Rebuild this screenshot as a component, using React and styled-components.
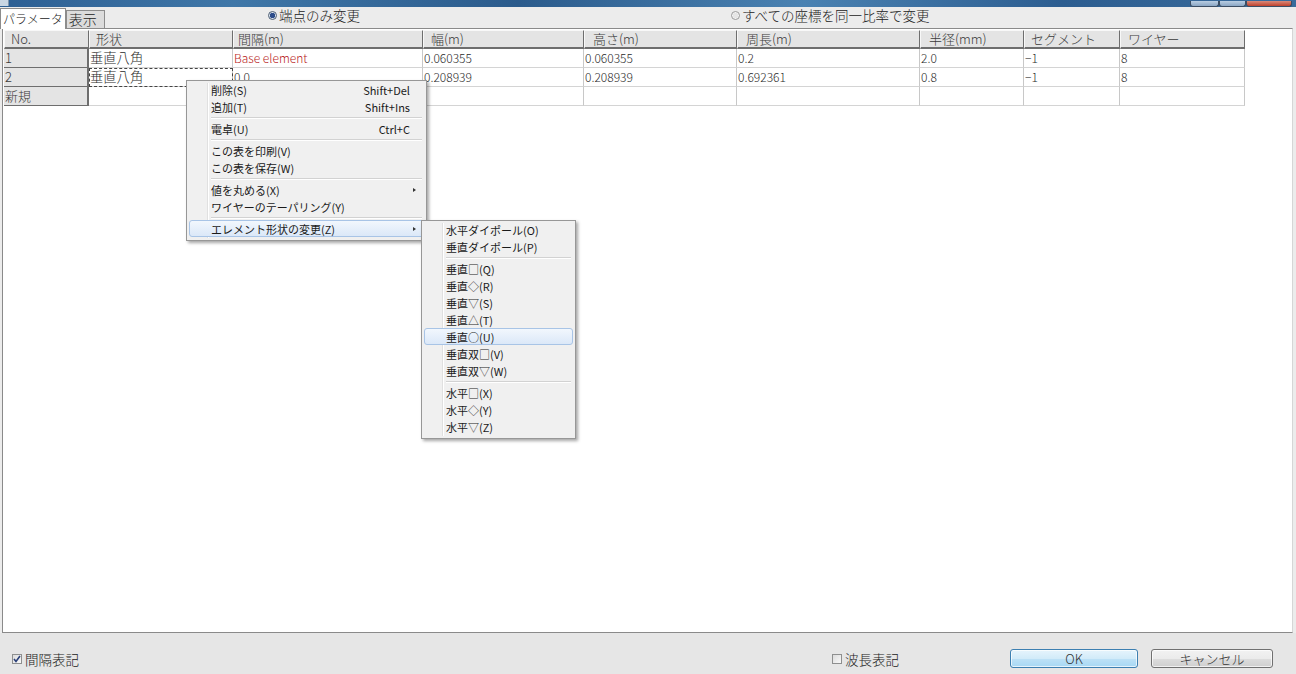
import React from "react";
import styled, { createGlobalStyle, css } from "styled-components";

const GlobalStyle = createGlobalStyle`
  html, body {
    margin: 0;
    padding: 0;
    background: #ececec;
    font-family: "Noto Sans CJK JP", "Noto Sans", sans-serif;
    color: #1e1e1e;
  }
`;

const columns = [
  { title: "No.", width: 85, indent: 6 },
  { title: "形状", width: 144, indent: 6 },
  { title: "間隔(m)", width: 190, indent: 4 },
  { title: "幅(m)", width: 161, indent: 7 },
  { title: "高さ(m)", width: 153, indent: 8 },
  { title: "周長(m)", width: 183, indent: 8 },
  { title: "半径(mm)", width: 104, indent: 8 },
  { title: "セグメント", width: 96, indent: 6 },
  { title: "ワイヤー", width: 125, indent: 7 },
];

const rows = [
  ["1", "垂直八角", "Base element", "0.060355", "0.060355", "0.2", "2.0", "−1", "8"],
  ["2", "垂直八角", "0.0", "0.208939", "0.208939", "0.692361", "0.8", "−1", "8"],
  ["新規", "", "", "", "", "", "", "", ""],
];

const mainMenu = [
  { label: "削除(S)", key: "Shift+Del" },
  { label: "追加(T)", key: "Shift+Ins" },
  "sep",
  { label: "電卓(U)", key: "Ctrl+C" },
  "sep",
  { label: "この表を印刷(V)" },
  { label: "この表を保存(W)" },
  "sep",
  { label: "値を丸める(X)", sub: true },
  { label: "ワイヤーのテーパリング(Y)" },
  "sep",
  { label: "エレメント形状の変更(Z)", sub: true, active: true },
];

const shapeMenu = [
  { label: "水平ダイポール(O)" },
  { label: "垂直ダイポール(P)" },
  "sep",
  { label: "垂直□(Q)" },
  { label: "垂直◇(R)" },
  { label: "垂直▽(S)" },
  { label: "垂直△(T)" },
  { label: "垂直○(U)", active: true },
  { label: "垂直双□(V)" },
  { label: "垂直双▽(W)" },
  "sep",
  { label: "水平□(X)" },
  { label: "水平◇(Y)" },
  { label: "水平▽(Z)" },
];

const isCjk = (s) => /[\u3040-\u30ff\u4e00-\u9fff]/.test(s);

const Window = styled.div`
  width: 1296px;
  height: 674px;
  display: flex;
  flex-direction: column;
  overflow: hidden;
`;

const TitleStrip = styled.div`
  height: 7px;
  display: flex;
  justify-content: space-between;
  background: linear-gradient(90deg, #2d5f93 0%, #3f77a8 18%, #2b5b8c 40%, #4a82b2 62%, #2c5d90 82%, #3a6c9c 100%);
`;

const AppIcon = styled.div`
  width: 8px;
  height: 6px;
  background: #c9d6e3;
  border-right: 1px solid #7f95ab;
`;

const Controls = styled.div`
  display: flex;
  align-items: flex-end;
  margin-right: 4px;
`;

const CtrlBtn = styled.div`
  width: ${(p) => p.$w}px;
  height: 5px;
  border: 1px solid #3b4d63;
  border-top: none;
  border-radius: 0 0 3px 3px;
  background: ${(p) => (p.$close ? "linear-gradient(#d98a7a, #c0412c)" : "linear-gradient(#b9cde2, #8aa6c4)")};
`;

const TopBar = styled.div`
  height: 21px;
  display: flex;
  align-items: flex-end;
  background: #ececec;
  position: relative;
`;

const Tab = styled.div`
  height: ${(p) => (p.$active ? 21 : 18)}px;
  box-sizing: border-box;
  padding: ${(p) => (p.$active ? "0 2px" : "0 7px 0 2px")};
  font-size: ${(p) => (p.$active ? 12 : 14)}px;
  font-weight: 300;
  line-height: ${(p) => (p.$active ? 20 : 17)}px;
  border: 1px solid #8c8c8c;
  border-bottom: none;
  background: ${(p) => (p.$active ? "#ffffff" : "#dcdcdc")};
  color: #222;
  margin-bottom: ${(p) => (p.$active ? -1 : 0)}px;
  z-index: ${(p) => (p.$active ? 2 : 1)};
`;

const Radio = styled.label`
  position: absolute;
  top: 0;
  left: ${(p) => p.$left}px;
  display: flex;
  align-items: center;
  gap: 2px;
  font-size: 13.5px;
  font-weight: 300;
  line-height: 17px;
  color: #222;
`;

const RadioDot = styled.span`
  width: 9px;
  height: 9px;
  border-radius: 50%;
  box-sizing: border-box;
  border: 1px solid ${(p) => (p.$on ? "#4f5f74" : "#9a9a9a")};
  background: ${(p) =>
    p.$on ? "radial-gradient(circle, #2d4d8a 0 2.5px, #d8e2ee 3px)" : "radial-gradient(circle, #e6e6e6 0 2.5px, #f4f4f4 3px)"};
`;

const GridPane = styled.div`
  flex: 1;
  position: relative;
  background: #ffffff;
  border: 1px solid #8a8a8a;
  border-right-color: #d6d6d6;
  margin: 0 3px 0 2px;
  padding: 1px 0 0 1px;
`;

const Table = styled.div`
  display: grid;
  grid-template-columns: ${columns.map((c) => c.width + "px").join(" ")};
  grid-auto-rows: 19px;
  width: max-content;
  font-weight: 300;
`;

const HeadCell = styled.div`
  background: #e4e4e4;
  border-right: 1px solid #6e6e6e;
  border-bottom: 2px solid #6e6e6e;
  border-top: 1px solid #f8f8f8;
  border-left: 1px solid #f8f8f8;
  box-sizing: border-box;
  padding-left: ${(p) => p.$indent}px;
  font-size: 13px;
  line-height: 15px;
  color: #3a3a3a;
  white-space: nowrap;
  overflow: hidden;
`;

const RowHead = styled.div`
  background: #e4e4e4;
  border-right: 2px solid #6e6e6e;
  border-bottom: 1px solid #6e6e6e;
  box-sizing: border-box;
  padding-left: 1px;
  font-size: 13px;
  line-height: 17px;
  color: #3a3a3a;
`;

const Cell = styled.div`
  position: relative;
  border-right: 1px solid #c8c8c8;
  border-bottom: 1px solid #d4d4d4;
  box-sizing: border-box;
  padding-left: 1px;
  font-size: ${(p) => (p.$cjk ? 13.3 : 12)}px;
  line-height: 17px;
  white-space: nowrap;
  overflow: hidden;
  color: ${(p) => (p.$warn ? "#b81c1c" : "#2a2a2a")};
  ${(p) =>
    p.$focus &&
    css`
      outline: 1px dashed #444;
      outline-offset: -1px;
    `}
`;

const Menu = styled.div`
  position: absolute;
  top: ${(p) => p.$top}px;
  left: ${(p) => p.$left}px;
  width: ${(p) => p.$width}px;
  box-sizing: border-box;
  padding: 0 2px 3px;
  background: #f0f0f0;
  border: 1px solid #979797;
  box-shadow: 2px 2px 3px rgba(0, 0, 0, 0.35);
  z-index: ${(p) => p.$z};
  &::before {
    content: "";
    position: absolute;
    top: 2px;
    bottom: 2px;
    left: 20px;
    width: 1px;
    background: #e0e0e0;
    border-right: 1px solid #ffffff;
  }
`;

const Item = styled.div`
  position: relative;
  height: 17px;
  display: flex;
  align-items: center;
  padding: 0 12px 0 ${(p) => p.$pad}px;
  box-sizing: border-box;
  font-size: 11px;
  color: #1a1a1a;
  border: 1px solid transparent;
  border-radius: 3px;
  ${(p) =>
    p.$active &&
    css`
      border-color: #a8c4e6;
      background: linear-gradient(#f2f7fd, #dbe8f8);
    `}
`;

const ItemLabel = styled.span`
  flex: 1;
  z-index: 1;
`;

const Shortcut = styled.span`
  font-size: 11px;
  margin-right: 1px;
`;

const Arrow = styled.span`
  position: absolute;
  right: 7px;
  top: 6px;
  width: 0;
  height: 0;
  border-top: 2.5px solid transparent;
  border-bottom: 2.5px solid transparent;
  border-left: 3px solid #333;
`;

const Separator = styled.div`
  height: 0;
  margin: 2px 2px 1px 22px;
  border-top: 1px solid #d2d2d2;
  border-bottom: 1px solid #ffffff;
`;

const Footer = styled.div`
  height: 41px;
  display: flex;
  align-items: center;
  padding: 10px 0 0 12px;
  box-sizing: border-box;
  background: #e6e6e6;
`;

const Check = styled.label`
  display: flex;
  align-items: center;
  gap: 3px;
  font-size: 13.5px;
  font-weight: 300;
  color: #222;
  margin-right: ${(p) => p.$mr || 0}px;
`;

const Box = styled.span`
  width: 10px;
  height: 10px;
  box-sizing: border-box;
  border: 1px solid #8e8f8f;
  background: linear-gradient(135deg, #dcdcdc, #f8f8f8);
  display: flex;
  align-items: center;
  justify-content: center;
`;

const Spacer = styled.div`
  flex: 1;
`;

const Button = styled.button`
  width: ${(p) => p.$w}px;
  height: 19px;
  margin-right: ${(p) => p.$mr}px;
  padding: 0;
  font-family: inherit;
  font-size: 13px;
  font-weight: 300;
  line-height: 17px;
  color: #333;
  border-radius: 3px;
  border: 1px solid ${(p) => (p.$default ? "#3c7fb1" : "#707070")};
  background: ${(p) =>
    p.$default ? "linear-gradient(#e6f4fc 0%, #d2ebf9 50%, #bde1f6 51%, #a7d8f4 100%)" : "linear-gradient(#f2f2f2 0%, #ebebeb 50%, #dddddd 51%, #cfcfcf 100%)"};
  box-shadow: inset 0 0 0 1px rgba(255, 255, 255, 0.7);
`;

function MenuList({ items, top, left, width, z }) {
  return (
    <Menu $top={top} $left={left} $width={width} $z={z}>
      {items.map((it, i) =>
        it === "sep" ? (
          <Separator key={i} />
        ) : (
          <Item key={i} $active={it.active} $pad={21}>
            <ItemLabel>{it.label}</ItemLabel>
            {it.key && <Shortcut>{it.key}</Shortcut>}
            {it.sub && <Arrow />}
          </Item>
        )
      )}
    </Menu>
  );
}

export default function App() {
  return (
    <Window>
      <GlobalStyle />
      <TitleStrip>
        <AppIcon />
        <Controls>
          <CtrlBtn $w={27} />
          <CtrlBtn $w={25} />
          <CtrlBtn $w={44} $close />
        </Controls>
      </TitleStrip>
      <TopBar>
        <Tab $active>パラメータ</Tab>
        <Tab>表示</Tab>
        <Radio $left={268}>
          <RadioDot $on />
          端点のみ変更
        </Radio>
        <Radio $left={731}>
          <RadioDot />
          すべての座標を同一比率で変更
        </Radio>
      </TopBar>
      <GridPane>
        <Table>
          {columns.map((c) => (
            <HeadCell key={c.title} $indent={c.indent}>
              {c.title}
            </HeadCell>
          ))}
          {rows.map((r, ri) =>
            r.map((v, ci) =>
              ci === 0 ? (
                <RowHead key={ri + "-" + ci}>{v}</RowHead>
              ) : (
                <Cell
                  key={ri + "-" + ci}
                  $cjk={isCjk(v)}
                  $warn={v === "Base element"}
                  $focus={ri === 1 && ci === 1}
                >
                  {v}
                </Cell>
              )
            )
          )}
        </Table>
        <MenuList items={mainMenu} top={51} left={183} width={241} z={5} />
        <MenuList items={shapeMenu} top={191} left={418} width={155} z={6} />
      </GridPane>
      <Footer>
        <Check>
          <Box>
            <svg width="8" height="8" viewBox="0 0 8 8">
              <path d="M1 4 L3 6.5 L7 1" fill="none" stroke="#2a3f78" strokeWidth="1.6" />
            </svg>
          </Box>
          間隔表記
        </Check>
        <Spacer />
        <Check $mr={111}>
          <Box />
          波長表記
        </Check>
        <Button $w={128} $mr={13} $default>
          OK
        </Button>
        <Button $w={122} $mr={23}>
          キャンセル
        </Button>
      </Footer>
    </Window>
  );
}
